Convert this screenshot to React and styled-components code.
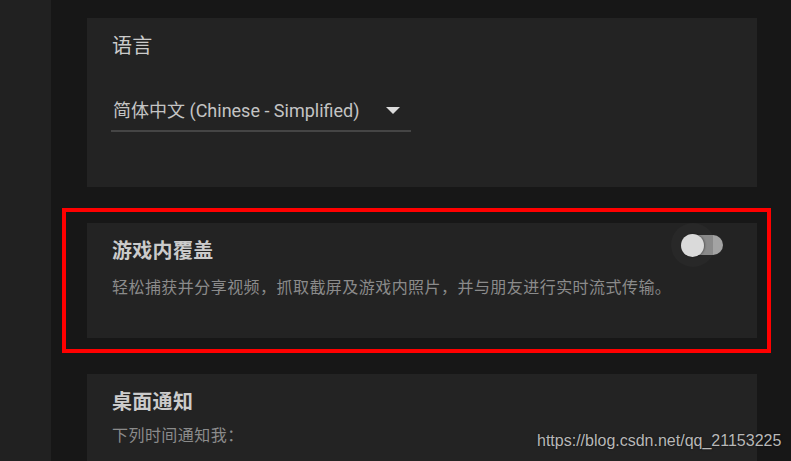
import styled, { createGlobalStyle } from "styled-components";

const GlobalStyle = createGlobalStyle`
  html, body {
    margin: 0;
    padding: 0;
    background: #171717;
  }
  body {
    font-family: Roboto, "Noto Sans CJK SC", sans-serif;
  }
`;

const Page = styled.div`
  display: flex;
  width: 791px;
  height: 461px;
  overflow: hidden;
  position: relative;
  background-color: #171717;
`;

const Sidebar = styled.div`
  width: 51px;
  flex-shrink: 0;
  background-color: #212121;
`;

const Main = styled.div`
  flex: 1;
  display: flex;
  flex-direction: column;
  gap: 36px;
  padding: 18px 34px 0 36px;
`;

const Card = styled.div`
  position: relative;
  background-color: #232323;
  min-height: ${(p) => p.$height}px;
  box-sizing: border-box;
  padding: 15px 34px 0 25px;
  flex-shrink: 0;
`;

const Highlight = styled.div`
  position: relative;
  flex-shrink: 0;

  &::after {
    content: "";
    position: absolute;
    top: -15px;
    left: -25px;
    right: -14px;
    bottom: -15px;
    border: 4px solid #ff0000;
    pointer-events: none;
  }
`;

const Header = styled.div`
  display: flex;
  justify-content: space-between;
  align-items: flex-start;
`;

const Title = styled.h2`
  margin: 0;
  font-family: "Noto Sans CJK SC", sans-serif;
  font-size: 20px;
  line-height: 24px;
  letter-spacing: 0.3px;
  font-weight: ${(p) => (p.$bold ? 700 : 400)};
  color: #cbcbcb;
`;

const Desc = styled.p`
  margin: ${(p) => p.$gap}px 0 0;
  font-family: "Noto Sans CJK SC", sans-serif;
  font-size: 16px;
  line-height: 20px;
  letter-spacing: 0.45px;
  color: #8b8b8b;
`;

const Select = styled.div`
  width: 300px;
  box-sizing: border-box;
  margin-top: 42px;
  margin-left: -1px;
  padding: 0 11px 7px 2px;
  display: flex;
  align-items: center;
  justify-content: space-between;
  border-bottom: 2px solid #454545;
`;

const SelectText = styled.span`
  font-family: Roboto, "Noto Sans CJK SC", sans-serif;
  font-size: 18px;
  line-height: 24px;
  color: #c4c4c4;
`;

const Arrow = styled.span`
  width: 0;
  height: 0;
  border-left: 7.5px solid transparent;
  border-right: 7.5px solid transparent;
  border-top: 7px solid #dcdcdc;
  margin-top: -1px;
`;

const Toggle = styled.div`
  position: relative;
  width: 42px;
  height: 24px;
  margin-top: -5px;
  flex-shrink: 0;
`;

const Track = styled.div`
  position: absolute;
  left: 6px;
  right: 0;
  top: 2px;
  height: 20px;
  border-radius: 10px;
  background: linear-gradient(to right, #8a8a8a 72%, #a3a3a3 72%);
`;

const Halo = styled.div`
  position: absolute;
  left: -10px;
  top: -10px;
  width: 44px;
  height: 44px;
  border-radius: 50%;
  background: rgba(255, 255, 255, 0.025);
`;

const Thumb = styled.div`
  position: absolute;
  left: 0;
  top: 0.5px;
  width: 23px;
  height: 23px;
  border-radius: 50%;
  background: #dadada;
  box-shadow: 1px 0 2px rgba(0, 0, 0, 0.35);
`;

const Watermark = styled.span`
  position: absolute;
  left: 537px;
  top: 431px;
  font-family: "Liberation Sans", Arial, sans-serif;
  font-size: 16px;
  line-height: 20px;
  color: #b8b8b8;
  text-shadow: 0 0 2px rgba(0, 0, 0, 0.6);
`;

const App = () => {
  return (
    <>
      <GlobalStyle />
      <Page>
        <Sidebar />
        <Main>
          <Card $height={169}>
            <Title>语言</Title>
            <Select>
              <SelectText>简体中文 (Chinese - Simplified)</SelectText>
              <Arrow />
            </Select>
          </Card>
          <Highlight>
            <Card $height={115}>
              <Header>
                <Title $bold>游戏内覆盖</Title>
                <Toggle>
                  <Halo />
                  <Track />
                  <Thumb />
                </Toggle>
              </Header>
              <Desc $gap={14}>
                轻松捕获并分享视频，抓取截屏及游戏内照片，并与朋友进行实时流式传输。
              </Desc>
            </Card>
          </Highlight>
          <Card $height={120}>
            <Title $bold>桌面通知</Title>
            <Desc $gap={11}>下列时间通知我：</Desc>
          </Card>
        </Main>
        <Watermark>https://blog.csdn.net/qq_21153225</Watermark>
      </Page>
    </>
  );
};

export default App;
